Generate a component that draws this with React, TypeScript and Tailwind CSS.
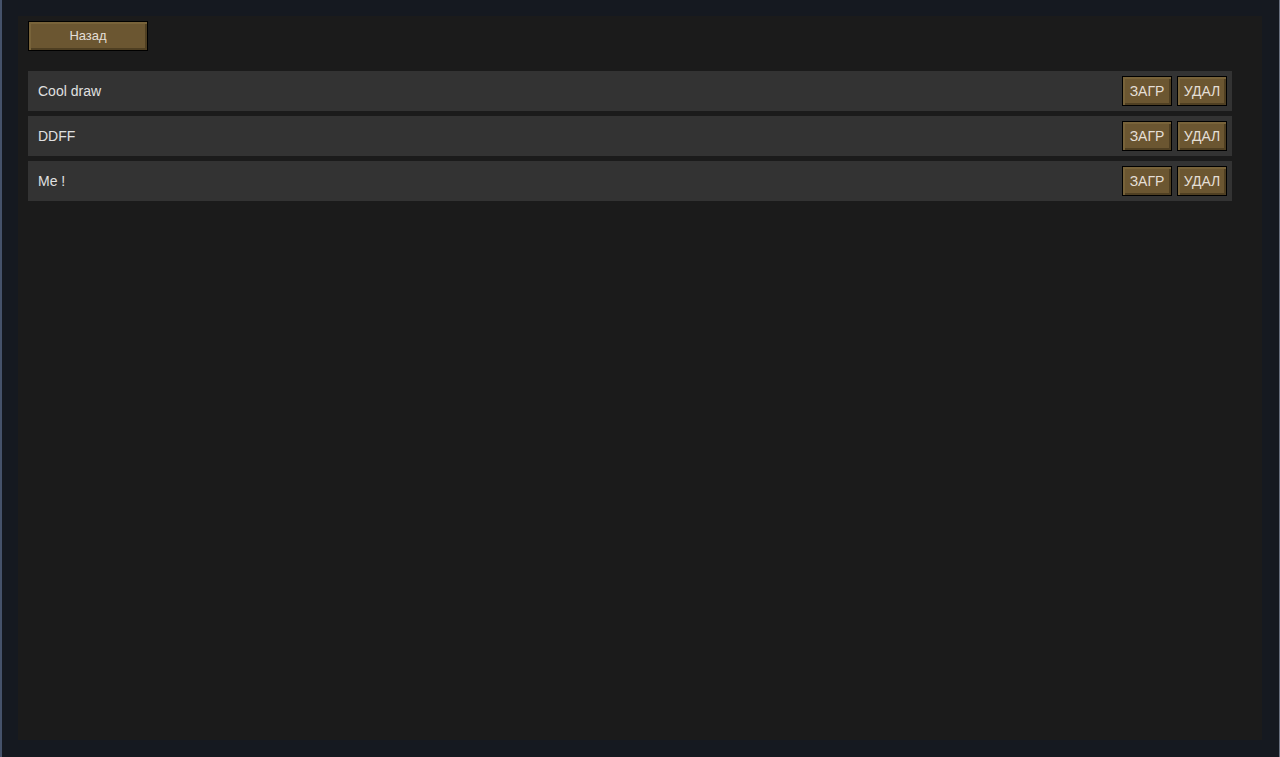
import React from "react";

const saves = ["Cool draw", "DDFF", "Me !"];

const bevel =
  "border border-black bg-[#6b5631] text-[#e4dfd6] shadow-[inset_2px_2px_0_#78633a,inset_-2px_-2px_0_#4f3f22]";

export default function App() {
  return (
    <div
      className="h-[757px] w-[1280px] bg-[#151920] border-l-2 border-l-[#45526a] border-r border-r-[#6b7280] pt-4 pb-[17px] pl-4 pr-[17px] overflow-hidden"
      style={{ fontFamily: "'Liberation Sans', Arial, sans-serif" }}
    >
      <div className="h-full bg-[#1b1b1b] pt-[5px] pl-[10px] pr-[30px]">
        <button className={`${bevel} h-[30px] w-[120px] text-[13px]`}>Назад</button>

        <div className="mt-5 flex flex-col gap-[5px]">
          {saves.map((name) => (
            <div key={name} className="flex h-10 items-center bg-[#333333] pl-[10px] pr-[5px]">
              <span className="flex-1 text-sm text-[#e0e0e0]">{name}</span>
              <div className="flex gap-[5px]">
                <button className={`${bevel} h-[30px] w-[50px] text-sm`}>ЗАГР</button>
                <button className={`${bevel} h-[30px] w-[50px] text-sm`}>УДАЛ</button>
              </div>
            </div>
          ))}
        </div>
      </div>
    </div>
  );
}
